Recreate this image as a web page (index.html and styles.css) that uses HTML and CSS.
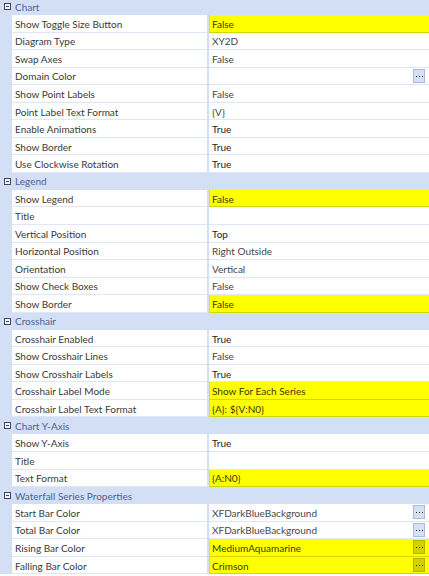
FILE: index.html
```html
<!DOCTYPE html>
<html lang="en">
<head>
    <meta charset="UTF-8">
    <title>Property Grid</title>
    <link rel="stylesheet" href="styles.css">
</head>
<body>

    <div class="grid">

        <!-- Chart -->
        <div class="cat"><span class="toggle"></span><span class="cat-name">Chart</span><span class="cat-val"></span></div>
        <div class="row"><div class="name">Show Toggle Size Button</div><div class="val mark">False</div></div>
        <div class="row"><div class="name">Diagram Type</div><div class="val">XY2D</div></div>
        <div class="row"><div class="name">Swap Axes</div><div class="val">False</div></div>
        <div class="row"><div class="name">Domain Color</div><div class="val"><span class="txt"></span><span class="dots"></span></div></div>
        <div class="row"><div class="name">Show Point Labels</div><div class="val">False</div></div>
        <div class="row"><div class="name">Point Label Text Format</div><div class="val">{V}</div></div>
        <div class="row"><div class="name">Enable Animations</div><div class="val strong">True</div></div>
        <div class="row"><div class="name">Show Border</div><div class="val strong">True</div></div>
        <div class="row"><div class="name">Use Clockwise Rotation</div><div class="val strong">True</div></div>

        <!-- Legend -->
        <div class="cat"><span class="toggle"></span><span class="cat-name">Legend</span><span class="cat-val"></span></div>
        <div class="row"><div class="name">Show Legend</div><div class="val mark">False</div></div>
        <div class="row"><div class="name">Title</div><div class="val"></div></div>
        <div class="row"><div class="name">Vertical Position</div><div class="val strong">Top</div></div>
        <div class="row"><div class="name">Horizontal Position</div><div class="val">Right Outside</div></div>
        <div class="row"><div class="name">Orientation</div><div class="val">Vertical</div></div>
        <div class="row"><div class="name">Show Check Boxes</div><div class="val">False</div></div>
        <div class="row"><div class="name">Show Border</div><div class="val mark">False</div></div>

        <!-- Crosshair -->
        <div class="cat"><span class="toggle"></span><span class="cat-name">Crosshair</span><span class="cat-val"></span></div>
        <div class="row"><div class="name">Crosshair Enabled</div><div class="val strong">True</div></div>
        <div class="row"><div class="name">Show Crosshair Lines</div><div class="val">False</div></div>
        <div class="row"><div class="name">Show Crosshair Labels</div><div class="val strong">True</div></div>
        <div class="row"><div class="name">Crosshair Label Mode</div><div class="val mark">Show For Each Series</div></div>
        <div class="row"><div class="name">Crosshair Label Text Format</div><div class="val mark">{A}: ${V:N0}</div></div>

        <!-- Chart Y-Axis -->
        <div class="cat"><span class="toggle"></span><span class="cat-name">Chart Y-Axis</span><span class="cat-val"></span></div>
        <div class="row"><div class="name">Show Y-Axis</div><div class="val strong">True</div></div>
        <div class="row"><div class="name">Title</div><div class="val"></div></div>
        <div class="row"><div class="name">Text Format</div><div class="val mark">{A:N0}</div></div>

        <!-- Waterfall Series Properties -->
        <div class="cat"><span class="toggle"></span><span class="cat-name">Waterfall Series Properties</span><span class="cat-val"></span></div>
        <div class="row"><div class="name">Start Bar Color</div><div class="val"><span class="txt">XFDarkBlueBackground</span><span class="dots"></span></div></div>
        <div class="row"><div class="name">Total Bar Color</div><div class="val"><span class="txt">XFDarkBlueBackground</span><span class="dots"></span></div></div>
        <div class="row"><div class="name">Rising Bar Color</div><div class="val mark"><span class="txt">MediumAquamarine</span><span class="dots"></span></div></div>
        <div class="row"><div class="name">Falling Bar Color</div><div class="val mark"><span class="txt">Crimson</span><span class="dots"></span></div></div>

    </div>

</body>
</html>
```

FILE: styles.css
```css
/* === base === */
html, body {
    margin: 0;
    height: 100%;
    overflow: hidden;
    background: #ffffff;
}

body {
    font-family: Lato, "Noto Sans", sans-serif;
    font-size: 10px;
    color: #3a3a3a;
}

/* === grid shell: light blue shows through as gutter and splitter === */
.grid {
    display: flex;
    flex-direction: column;
    margin-top: -2px;
    background: #d3dff5;
}

/* === category header === */
.cat {
    display: flex;
    align-items: center;
    height: 17px;
    color: #4d5f93;
}

.toggle {
    position: relative;
    box-sizing: border-box;
    width: 7px;
    height: 7px;
    margin: 0 4px 0 4px;
    border: 1px solid #3e4660;
    background: #eef2fb;
}

.toggle::after {
    content: "";
    position: absolute;
    left: 1px;
    right: 1px;
    top: 2px;
    height: 1px;
    background: #3e4660;
}

.cat-name {
    width: 192px;
}

.cat-val {
    flex: 1;
    align-self: stretch;
    margin-left: 2px;
}

/* === property rows === */
.row {
    display: flex;
    height: 17.55px;
    padding-left: 12px;
}

.name,
.val {
    box-sizing: border-box;
    display: flex;
    align-items: center;
    background: #ffffff;
    border-bottom: 1px solid #dfe7f6;
    padding-top: 1px;
    white-space: nowrap;
}

.name {
    width: 195px;
    padding-left: 3px;
    color: #3a3a3a;
}

.val {
    flex: 1;
    margin-left: 2px;
    padding-left: 3px;
    color: #474747;
}

.val.strong {
    color: #262626;
}

.val.mark {
    background: #ffff00;
    border-bottom-color: #d6d600;
    box-shadow: inset 1px 0 0 #e2e200;
    color: #3a3a00;
}

.txt {
    flex: 1;
}

/* === "..." editor button === */
.dots {
    box-sizing: border-box;
    display: flex;
    justify-content: center;
    align-items: center;
    width: 12px;
    height: 14px;
    margin-right: 4px;
    margin-top: -1px;
    padding-top: 1px;
    border: 1px solid #aab9dc;
    background: #d6e0f5;
}

.dots::before {
    content: "";
    width: 7px;
    height: 1px;
    background: repeating-linear-gradient(to right, #2c2c2c 0 1px, transparent 1px 3px);
}

.val.mark .dots {
    background: #d2d200;
    border-color: #b4b400;
}
```
